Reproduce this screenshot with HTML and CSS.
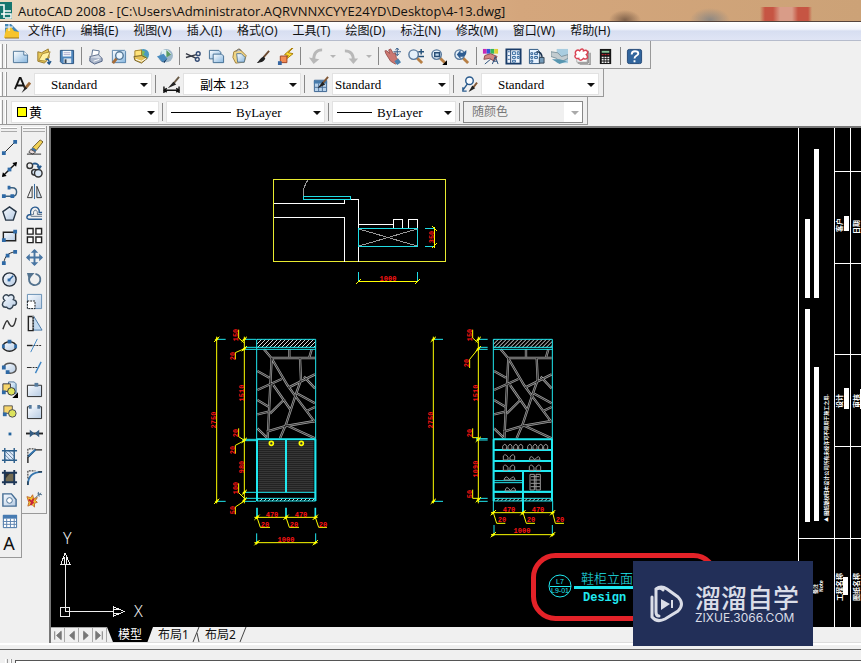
FILE: index.html
```html
<!DOCTYPE html>
<html lang="zh-CN">
<head>
<meta charset="utf-8">
<title>AutoCAD 2008</title>
<link rel="stylesheet" href="styles.css">
</head>
<body>
<svg class="defs" aria-hidden="true">
  <defs>
    <linearGradient id="sheet" x1="0" y1="0" x2="1" y2="1"><stop offset="0" stop-color="#fff"/><stop offset="1" stop-color="#86b6df"/></linearGradient>
    <linearGradient id="soft" x1="0" y1="0" x2="1" y2="1"><stop offset="0" stop-color="#f8fbff"/><stop offset="1" stop-color="#b6cbe3"/></linearGradient>
    <symbol id="magnifier" viewBox="0 0 18 18"><path d="M10 10l6 6" stroke="#b77f45" stroke-width="3"/><circle cx="7" cy="7" r="5" fill="#e5f0fa" stroke="#59799c" stroke-width="1.500"/></symbol>
    <symbol id="brush" viewBox="0 0 18 18"><path d="M16 3l-6 7" stroke="#6a4a31" stroke-width="2"/><path d="M10 9l2 2c-2 4-5 4-9 5 2-2 4-6 7-7z" fill="#222"/></symbol>
    <symbol id="arrow" viewBox="0 0 8 4"><path d="M0 0h8L4 4z" fill="currentColor"/></symbol>
  </defs>
</svg>
<div class="app">
  <header class="title">
    <svg class="app-icon" viewBox="0 0 12 18"><path d="M0 0h12v17H0z" fill="#16766f"/><path d="M0 3h4v6h7M4 9v7M1 12h10v4H5" fill="none" stroke="#fff" stroke-width="1.500"/></svg>
    <h1>AutoCAD 2008 - [C:\Users\Administrator.AQRVNNXCYYE24YD\Desktop\4-13.dwg]</h1>
  </header>
  <nav class="menu">
    <svg width="16" height="17" viewBox="0 0 16 17"><path d="M1 1h6l8 8v6H1z" fill="#4687b5"/><path d="M2 6l5-2 3 4 5 1v6H0z" fill="#f7c42c"/><path d="M1 4h8M5 0v8" stroke="#fff"/><path d="M1 15h14" stroke="#9c741d"/></svg>
    <button>文件(F)</button><button>编辑(E)</button><button>视图(V)</button><button>插入(I)</button><button>格式(O)</button><button>工具(T)</button><button>绘图(D)</button><button>标注(N)</button><button>修改(M)</button><button>窗口(W)</button><button>帮助(H)</button>
  </nav>

  <div class="bar standard">
    <i class="grip"></i>
    <button aria-label="新建"><svg viewBox="0 0 18 18"><path d="M1.500 3.500h11l4 4v8h-15z" fill="url(#sheet)" stroke="#4b7396"/><path d="M12.500 3.500v4h4" fill="#fff" stroke="#4b7396"/></svg></button>
    <button aria-label="打开"><svg viewBox="0 0 18 18"><path d="M3 4l4 1 7-4 1 9-5 6-7-2z" fill="#e8c957" stroke="#97782a"/><path d="M4 13l4-7 8-2-4 10z" fill="#fff1a0" stroke="#a98a36"/><path d="M11 12c3-1 4 1 4 4M13 15l2 2 2-3" fill="none" stroke="#24588a" stroke-width="1.500"/></svg></button>
    <button aria-label="保存"><svg viewBox="0 0 18 18"><path d="M2.500 2.500h14v14h-12l-2-2z" fill="#4e86bd" stroke="#28527d"/><path d="M5 3h9v6H5z" fill="#f4f8fc"/><path d="M6 5h7M6 7h7" stroke="#aac"/><path d="M6 11h8v5H6z" fill="#dfe9f2"/><path d="M7 12h2v4H7z" fill="#345"/></svg></button>
    <i class="sep"></i>
    <button aria-label="打印"><svg viewBox="0 0 18 18"><path d="M5 8l1-6 7 1-1 6" fill="#fff" stroke="#58708f"/><path d="M3 9l9-2 4 4-9 4z" fill="#d5dce8" stroke="#5c6c89"/><path d="M3 10v4l5 3 8-3v-3" fill="#aab6ca" stroke="#4d5f81"/><path d="M7 14l6-2" stroke="#fff"/></svg></button>
    <button aria-label="打印预览"><svg viewBox="0 0 18 18"><path d="M2.500 2.500h13l1 1v12h-14z" fill="url(#sheet)" stroke="#5783aa"/><path d="M8 10l-5 6" stroke="#a66c38" stroke-width="3"/><circle cx="10" cy="8" r="4" fill="#eaf6ff" stroke="#567999" stroke-width="1.500"/></svg></button>
    <button aria-label="发布"><svg viewBox="0 0 18 18"><circle cx="11" cy="7" r="6" fill="#4b99c0"/><path d="M8 2l5 2-2 3 4 3-4 2z" fill="#80ba56"/><path d="M2 3l7-1v7H2z" fill="#ffe37a" stroke="#a38127"/><path d="M1 9l8-1 6 3-6 5-7-3z" fill="#e4c158" stroke="#746026"/><path d="M3 12l6 2 5-3" fill="none" stroke="#fff"/></svg></button>
    <button aria-label="三维发布"><svg viewBox="0 0 18 18"><circle cx="11" cy="8" r="7" fill="#9db7c9"/><path d="M6 2h6l4 4-5 4-5-2z" fill="#e1f0f3"/><path d="M11 2l5 5-5 3z" fill="#5b9b61"/><path d="M1 9l7-3 4 5-5 4z" fill="#4a8cc0"/><path d="M2 11l5 4 5-4-3 5z" fill="#173c65"/></svg></button>
    <i class="sep"></i>
    <button aria-label="剪切"><svg viewBox="0 0 18 18"><path d="M1 6l11 5M1 10l11-3" stroke="#353a45" stroke-width="1.500"/><circle cx="14" cy="6" r="2" fill="none" stroke="#334b74" stroke-width="1.500"/><circle cx="13" cy="12" r="2" fill="none" stroke="#334b74" stroke-width="1.500"/></svg></button>
    <button aria-label="复制"><svg viewBox="0 0 18 18"><path d="M1.500 2.500h10l2 2v7h-12z" fill="url(#sheet)" stroke="#426c92"/><path d="M5.500 6.500h9l2 2v7h-11z" fill="url(#sheet)" stroke="#426c92"/></svg></button>
    <button aria-label="粘贴"><svg viewBox="0 0 18 18"><path d="M3 4l6-3 7 7-2 7-9 1-3-6z" fill="#f0d585" stroke="#a18038"/><path d="M6 6h5l4 4-1 5H7z" fill="url(#sheet)" stroke="#587892"/><path d="M5 4l3-3 3 2" fill="#bbb" stroke="#666"/></svg></button>
    <button aria-label="特性匹配"><svg viewBox="0 0 18 18"><use href="#brush"/></svg></button>
    <button aria-label="块编辑器"><svg viewBox="0 0 18 18"><path d="M16 0L8 7l4 1-5 6 10-8-5-1 5-5z" fill="#ffe030" stroke="#a77900"/><path d="M3.500 8.500h7v7h-7z" fill="#f48c53" stroke="#9b4223"/><path d="M1 14h4v4H1z" fill="#3566a2"/></svg></button>
    <i class="sep"></i>
    <button class="step" aria-label="放弃"><svg viewBox="0 0 18 18"><path d="M16 2C10 2 7 6 7 13" fill="none" stroke="#b8b8b8" stroke-width="3"/><path d="M2 10l5 7 6-5z" fill="#b8b8b8"/></svg></button>
    <button class="more" aria-label="放弃列表"><svg viewBox="0 0 8 4"><use href="#arrow"/></svg></button>
    <button class="step" aria-label="重做"><svg viewBox="0 0 18 18"><path d="M2 3c6 0 9 4 9 10" fill="none" stroke="#b8b8b8" stroke-width="3"/><path d="M6 11l5 6 5-6z" fill="#b8b8b8"/></svg></button>
    <button class="more" aria-label="重做列表"><svg viewBox="0 0 8 4"><use href="#arrow"/></svg></button>
    <i class="sep"></i>
    <button aria-label="平移"><svg viewBox="0 0 18 18"><path d="M1 3l2 0 3 3-1-4 2-1 3 5 2-1 1 5 3 4-4 3-5-3-5-8z" fill="#cc7771" stroke="#9c5653"/><path d="M11 14l4-3 3 4-4 3z" fill="#4a80ad"/><path d="M14 0v8M10 4h8M12 2l2-2 2 2M12 6l2 2 2-2" fill="none" stroke="#2c5685"/></svg></button>
    <button aria-label="实时缩放"><svg viewBox="0 0 18 18"><use href="#magnifier"/><path d="M12 4h6M15 1v6M12 9h6" stroke="#245078" stroke-width="1.500"/></svg></button>
    <button aria-label="窗口缩放"><svg viewBox="0 0 18 18"><use href="#magnifier"/><path d="M5 5h5v4H5z" fill="#bdd7ed" stroke="#294d75" stroke-width="1.500"/><path d="M18 13v5h-5z"/></svg></button>
    <button aria-label="缩放上一个"><svg viewBox="0 0 18 18"><use href="#magnifier"/><path d="M4 7l4-5v3c3 0 4-1 6-3 1 5-2 8-6 7v3z" fill="#2d5c91"/></svg></button>
    <i class="sep"></i>
    <button aria-label="特性"><svg viewBox="0 0 18 18"><path d="M1 1h4v5H1z" fill="#c82ab7"/><path d="M5 1h4v5H5z" fill="#3256da"/><path d="M9 1h4v5H9z" fill="#34b65a"/><path d="M13 1h4v5h-4z" fill="#e1d134"/><path d="M3 8l6-2 7 3-3 5-5-3-6 1z" fill="#d48783" stroke="#8e4a4c"/><path d="M3 17l6-5M11 17l3-8 3 8M12 14h4" fill="none" stroke="#274d79"/></svg></button>
    <button aria-label="设计中心"><svg viewBox="0 0 18 18"><path d="M1.500 1.500h15v15h-15z" fill="#eff6ff" stroke="#1a3c68" stroke-width="2"/><path d="M6 2v14" stroke="#1a3c68"/><path d="M3 4h2M3 8h2M3 12h2M8 4h3v3H8zM13 4h2v3h-2zM8 9h3v2H8zM13 9h2v2h-2zM8 13h3v2H8z" fill="none" stroke="#31669d"/></svg></button>
    <button aria-label="工具选项板"><svg viewBox="0 0 18 18"><path d="M1.500 1.500h9l2 3v12h-11z" fill="#e7f2ff" stroke="#285580"/><path d="M3 5h2v2H3zM7 5h3v2H7zM3 9h2v2H3zM7 9h3v2H7zM3 13h2v2H3z" fill="none" stroke="#2a5d94"/><path d="M9 4c5 0 6 3 6 7" fill="none" stroke="#172e4b" stroke-width="1.500"/><path d="M12 10h5v6h-5z" fill="#759bb9" stroke="#345"/></svg></button>
    <button aria-label="图纸集"><svg viewBox="0 0 18 18"><path d="M6 1h12v15H6z" fill="#a9cde0"/><path d="M0 4l7 1 4 4 7-2v4l-8 4-4-4-6-2z" fill="#c3ccd0" stroke="#7d949e"/><path d="M1 12h8l8 2-8 3z" fill="#5796b0"/></svg></button>
    <button aria-label="标记集"><svg viewBox="0 0 18 18"><path d="M3 3h11v12H3z" fill="#fff" stroke="#aaa"/><path d="M15 3v13H4M17 5v13H6" fill="none" stroke="#666"/><path d="M2 7c-2-4 2-6 4-4 2-3 4-2 4 0 4-2 6 2 3 4 3 3 0 6-3 4-2 3-5 2-5 0-4 1-5-3-3-4z" fill="#fff" stroke="#d94252" stroke-width="1.500"/></svg></button>
    <button aria-label="计算器"><svg viewBox="0 0 18 18"><path d="M3 1h12v16H3z" fill="#161616"/><path d="M5 3h8v2H5z" fill="#85c397"/><path d="M5 7h8" stroke="#d72432" stroke-dasharray="2 1"/><path d="M5 10h8M5 12.500h8M5 15h8" stroke="#eee" stroke-width="1.500" stroke-dasharray="2 1"/></svg></button>
    <i class="sep"></i>
    <button aria-label="帮助"><svg viewBox="0 0 18 18"><rect x="1.500" y="1.500" width="15" height="15" rx="2" fill="#31659d" stroke="#234876"/><path d="M6 7c0-5 7-4 7-1 0 2-4 2-4 5M9 13v2" fill="none" stroke="#fff" stroke-width="2"/></svg></button>
  </div>

  <div class="bar styles">
    <i class="grip"></i>
    <button class="wide" aria-label="文字样式"><svg viewBox="0 0 18 18"><path d="M1 14L6 2h1l5 12M3 10h7" fill="none" stroke="#141414" stroke-width="2"/><path d="M17 7l-5 6" stroke="#9c6a3a" stroke-width="3"/><path d="M12 11l2 2-6 5z" fill="#222"/></svg></button>
    <label class="combo inset"><select aria-label="文字样式列表"><option>Standard</option></select><svg viewBox="0 0 8 4"><use href="#arrow"/></svg></label>
    <i class="sep"></i>
    <button class="wide" aria-label="标注样式"><svg viewBox="0 0 18 18"><path d="M1 11v7M17 11v7M2 15h14M4 13l-3 2 3 2M14 13l3 2-3 2" fill="none" stroke="#111" stroke-width="1.500"/><path d="M17 1l-6 7" stroke="#685945" stroke-width="2"/><path d="M11 6l3 3-9 4z" fill="#222"/></svg></button>
    <label class="combo inset"><select aria-label="标注样式列表"><option>副本 123</option></select><svg viewBox="0 0 8 4"><use href="#arrow"/></svg></label>
    <i class="sep"></i>
    <button class="wide" aria-label="表格样式"><svg viewBox="0 0 18 18"><path d="M2.500 4.500h13v12h-13z" fill="#b9d3eb" stroke="#36618e"/><path d="M2 5h14v3H2z" fill="#477bab"/><path d="M3 12h12M7 8v8M11 8v8" stroke="#496f98"/><path d="M17 1l-6 7" stroke="#805634" stroke-width="2"/><path d="M11 6l3 3-8 4z" fill="#222"/></svg></button>
    <label class="combo"><select aria-label="表格样式列表"><option>Standard</option></select><svg viewBox="0 0 8 4"><use href="#arrow"/></svg></label>
    <i class="sep"></i>
    <button class="wide" aria-label="多重引线样式"><svg viewBox="0 0 18 18"><circle cx="9" cy="5" r="4" fill="#f8fbff" stroke="#2a5b8d" stroke-width="1.500"/><path d="M7 8l-5 7M2 12v4h4" fill="none" stroke="#2a5b8d" stroke-width="1.500"/><path d="M17 7l-4 5" stroke="#805634" stroke-width="2"/><path d="M12 10l3 3-7 4z" fill="#222"/></svg></button>
    <label class="combo inset"><select aria-label="引线样式列表"><option>Standard</option></select><svg viewBox="0 0 8 4"><use href="#arrow"/></svg></label>
  </div>

  <div class="bar properties">
    <i class="grip"></i>
    <label class="combo color"><i class="swatch"></i><select aria-label="颜色"><option>黄</option></select><svg viewBox="0 0 8 4"><use href="#arrow"/></svg></label>
    <i class="sep"></i>
    <label class="combo linetype"><i class="rule"></i><select aria-label="线型"><option>ByLayer</option></select><svg viewBox="0 0 8 4"><use href="#arrow"/></svg></label>
    <i class="sep"></i>
    <label class="combo weight"><i class="rule"></i><select aria-label="线宽"><option>ByLayer</option></select><svg viewBox="0 0 8 4"><use href="#arrow"/></svg></label>
    <i class="sep"></i>
    <label class="combo plot"><select aria-label="打印样式" disabled><option>随颜色</option></select><svg viewBox="0 0 8 4"><use href="#arrow"/></svg></label>
  </div>

  <main class="workspace">
    <aside class="palette draw">
      <i class="grip-h"></i>
      <button aria-label="直线"><svg viewBox="0 0 18 18"><path d="M3 15L15 3" stroke="#222"/><path d="M1 13h4v4H1zM13 1h4v4h-4z" fill="#2e69a5"/></svg></button>
      <button aria-label="构造线"><svg viewBox="0 0 18 18"><path d="M2 16L16 2" stroke="#111" stroke-width="1.500"/><path d="M1 17l1-5 4 4zM17 1l-1 5-4-4z"/><path d="M7 7h4v4H7z" fill="#2e69a5"/></svg></button>
      <button aria-label="多段线"><svg viewBox="0 0 18 18"><path d="M3 14h9c6 0 6-9 0-9H9" fill="none" stroke="#3b607f" stroke-width="1.500"/><path d="M1 12h4v4H1zM10 12h4v4h-4zM7 3h3v4H7z" fill="#2e69a5"/></svg></button>
      <button aria-label="正多边形"><svg viewBox="0 0 18 18"><path d="M9 2l7 5-3 9H5L2 7z" fill="url(#soft)" stroke="#263545" stroke-width="1.500"/></svg></button>
      <button aria-label="矩形"><svg viewBox="0 0 18 18"><path d="M2.500 5.500h13v9h-13z" fill="url(#soft)" stroke="#222" stroke-width="1.500"/><path d="M1 12h4v4H1zM13 3h4v4h-4z" fill="#2e69a5"/></svg></button>
      <button aria-label="圆弧"><svg viewBox="0 0 18 18"><path d="M3 15C4 7 8 4 15 3" fill="none" stroke="#222"/><path d="M1 13h4v4H1zM5 5h4v4H5zM13 1h4v4h-4z" fill="#2e69a5"/></svg></button>
      <button aria-label="圆"><svg viewBox="0 0 18 18"><circle cx="9" cy="9" r="7" fill="url(#soft)" stroke="#252f3c" stroke-width="1.500"/><path d="M8 10l5-5" stroke="#245b95" stroke-width="1.500"/><path d="M7 8h3v3H7z" fill="#2e69a5"/></svg></button>
      <button aria-label="修订云线"><svg viewBox="0 0 18 18"><path d="M4 8C0 5 4 0 8 3c4-3 7 1 5 4 5 1 4 7 0 6-1 4-5 5-7 2-5 1-6-4-2-7z" fill="url(#soft)" stroke="#344352" stroke-width="1.500"/></svg></button>
      <button aria-label="样条曲线"><svg viewBox="0 0 18 18"><path d="M2 15C7 1 7 7 9 10s5 4 7-7" fill="none" stroke="#333" stroke-width="1.500"/></svg></button>
      <button aria-label="椭圆"><svg viewBox="0 0 18 18"><ellipse cx="9" cy="10" rx="7" ry="5" fill="url(#soft)" stroke="#222" stroke-width="1.500"/><path d="M1 8h3v4H1zM14 8h3v4h-3zM7 3h4v4H7z" fill="#2e69a5"/></svg></button>
      <button aria-label="椭圆弧"><svg viewBox="0 0 18 18"><path d="M3 8c2-5 13-5 13 2 0 5-7 6-9 4" fill="url(#soft)" stroke="#555" stroke-width="1.500"/><path d="M1 7h4v4H1zM5 12h4v4H5z" fill="#2e69a5"/></svg></button>
      <button aria-label="插入块"><svg viewBox="0 0 18 18"><path d="M8 1h6l2 2v10H8z" fill="url(#sheet)" stroke="#4b7396"/><path d="M2 3h8v8H2z" fill="#f7d56a" stroke="#334"/><circle cx="11" cy="11" r="4" fill="#dce35d" stroke="#334"/><path d="M1 10h4v4H1z" fill="#2e69a5"/><path d="M18 12v6h-6z"/></svg></button>
      <button aria-label="创建块"><svg viewBox="0 0 18 18"><path d="M3 3h9v8H3z" fill="#f7d56a" stroke="#555"/><circle cx="12" cy="11" r="4" fill="#dce35d" stroke="#445"/><path d="M2 10h4v4H2z" fill="#2e69a5"/></svg></button>
      <button aria-label="点"><svg viewBox="0 0 18 18"><path d="M8 8h3v3H8z" fill="#22639d"/></svg></button>
      <button aria-label="图案填充"><svg viewBox="0 0 18 18"><path d="M4 4h10v10H4z" fill="#dceafa"/><path d="M4 4l10 10M4 8l6 6M8 4l6 6M4 12l2 2M12 4l2 2" stroke="#6c849d"/><path d="M4 1v16M14 1v16M1 4h16M1 14h16" stroke="#2b5e8b" stroke-width="1.500"/></svg></button>
      <button aria-label="渐变色"><svg viewBox="0 0 18 18"><path d="M4 4h10v10H4z" fill="#746c52"/><path d="M4 4h6L4 11z" fill="#333"/><path d="M4 1v16M14 1v16M1 4h16M1 14h16" stroke="#1d3657" stroke-width="2"/></svg></button>
      <button aria-label="面域"><svg viewBox="0 0 18 18"><path d="M2 3h9l5 6v7H2z" fill="url(#soft)" stroke="#446c94" stroke-width="1.500"/><circle cx="9" cy="10" r="3" fill="#fff" stroke="#446c94"/></svg></button>
      <button aria-label="表格"><svg viewBox="0 0 18 18"><path d="M2.500 2.500h14v13h-14z" fill="#fff" stroke="#3c6ca2"/><path d="M2 2h15v4H2z" fill="#477bb2"/><path d="M2 9h14M2 12h14M6 6v9M10 6v9M14 6v9" stroke="#5b82ae"/></svg></button>
      <button class="letter" aria-label="多行文字">A</button>
    </aside>
    <aside class="palette modify">
      <i class="grip-h"></i>
      <button aria-label="删除"><svg viewBox="0 0 18 18"><path d="M15 1l3 2-7 9-4-3z" fill="#f0d155" stroke="#6d5928"/><path d="M7 9l4 3-1 2-5-3z" fill="#3f70a0"/><path d="M5 11l5 3-3 2-4-2z" fill="#e9d9d9" stroke="#555"/><path d="M1 16h15" stroke="#222"/></svg></button>
      <button aria-label="复制对象"><svg viewBox="0 0 18 18"><circle cx="4" cy="5" r="3" fill="#eee" stroke="#333" stroke-width="1.500"/><circle cx="9" cy="12" r="3" fill="#dbe9f7" stroke="#333" stroke-width="1.500"/><circle cx="13" cy="13" r="4" fill="#dbe9f7" stroke="#333" stroke-width="1.500"/><path d="M7 3c4-1 6 0 7 4M12 5l2 3 2-3" fill="none" stroke="#27598b" stroke-width="2"/></svg></button>
      <button aria-label="镜像"><svg viewBox="0 0 18 18"><path d="M6.500 3.500v12h-5z" fill="#f5f5f5" stroke="#333"/><path d="M11.500 3.500v12h5z" fill="#cfe0f0" stroke="#333"/><path d="M9 1v16" stroke="#2b649c"/></svg></button>
      <button aria-label="偏移"><svg viewBox="0 0 18 18"><path d="M17 15H3c-3 0-3-5 2-5C3 0 15 0 14 8h3" fill="none" stroke="#285a8f" stroke-width="1.500"/><path d="M17 12H6c-2 0-1-2 2-2-1-6 5-6 4 0h5" fill="none" stroke="#5a6e85"/></svg></button>
      <button aria-label="阵列"><svg viewBox="0 0 18 18"><path d="M1.500 1.500h6v6h-6zM10.500 1.500h6v6h-6zM1.500 10.500h6v6h-6zM10.500 10.500h6v6h-6z" fill="#fff" stroke="#222" stroke-width="1.500"/></svg></button>
      <button aria-label="移动"><svg viewBox="0 0 18 18"><path d="M9 1v16M1 9h16" stroke="#4976a3" stroke-width="2"/><path d="M5 4l4-4 4 4zM5 14l4 4 4-4zM4 5L0 9l4 4zM14 5l4 4-4 4z" fill="#4976a3"/></svg></button>
      <button aria-label="旋转"><svg viewBox="0 0 18 18"><path d="M4 6a6 6 0 1 0 6-3" fill="none" stroke="#54738f" stroke-width="2"/><path d="M1 2h8l-6 7z" fill="#54738f"/></svg></button>
      <button aria-label="缩放对象"><svg viewBox="0 0 18 18"><path d="M1.500 1.500h15v15h-15z" fill="url(#soft)" stroke="#648cb3"/><path d="M1.500 8.500h8v8h-8z" fill="#fff" stroke="#111" stroke-dasharray="2 1"/></svg></button>
      <button aria-label="拉伸"><svg viewBox="0 0 18 18"><path d="M8 1l9 15H8z" fill="#c4dbf0" stroke="#4776a5"/><path d="M2.500 1.500h5v15h-5z" fill="#eee" stroke="#222" stroke-width="1.500"/><path d="M7.500 1v15" stroke="#fff" stroke-dasharray="1 2"/></svg></button>
      <button aria-label="修剪"><svg viewBox="0 0 18 18"><path d="M1 9h6" stroke="#222" stroke-width="1.500"/><path d="M8 9h9" stroke="#222" stroke-dasharray="2 1"/><path d="M5 16L12 2" stroke="#3e86c5"/></svg></button>
      <button aria-label="延伸"><svg viewBox="0 0 18 18"><path d="M1 9h5" stroke="#222"/><path d="M7 9h5" stroke="#222" stroke-dasharray="2 1"/><path d="M10 15l6-12" stroke="#3e86c5" stroke-width="1.500"/></svg></button>
      <button aria-label="打断于点"><svg viewBox="0 0 18 18"><path d="M1.500 4.500h15v12h-15z" fill="url(#soft)" stroke="#222"/><path d="M9 2h4v4H9z" fill="#557a9d"/></svg></button>
      <button aria-label="打断"><svg viewBox="0 0 18 18"><path d="M5 4H1.500v12.500h15V4H13" fill="url(#soft)" stroke="#222"/><path d="M3 2h3v4H3zM12 2h3v4h-3z" fill="#557a9d"/></svg></button>
      <button aria-label="合并"><svg viewBox="0 0 18 18"><path d="M0 9h18" stroke="#222" stroke-width="2"/><path d="M4 5l5 4-5 4zM14 5L9 9l5 4z" fill="#355d83"/></svg></button>
      <button aria-label="倒角"><svg viewBox="0 0 18 18"><path d="M2 17v-6l8-8h7" fill="none" stroke="#222" stroke-width="1.500"/><path d="M2 10l8-7" stroke="#3475ae" stroke-width="2"/><path d="M2 10V2h8" fill="none" stroke="#111" stroke-dasharray="2 1"/></svg></button>
      <button aria-label="圆角"><svg viewBox="0 0 18 18"><path d="M2 17c0-9 5-14 15-14" fill="none" stroke="#3475ae" stroke-width="2"/><path d="M2 17v-4M13 3h4" stroke="#222"/><path d="M2 10V2h8" fill="none" stroke="#111" stroke-dasharray="2 1"/></svg></button>
      <button aria-label="分解"><svg viewBox="0 0 18 18"><path d="M1 6l4 1 2-3 1 4 4-1-2 3 2 2-3 1v4l-3-3-4 2 1-4z" fill="#f0c331" stroke="#c06a2c"/><path d="M3 9l5 4M8 8l-3 7" stroke="#c8203a" stroke-width="2"/><path d="M10 7l6-5M13 1l1 5M12 3l5 1" stroke="#51728c"/></svg></button>
    </aside>

    <section class="document">
      <svg class="drawing" viewBox="51 128 810 499" preserveAspectRatio="xMinYMin slice" role="img" aria-label="鞋柜立面">
        <defs>
          <pattern id="hatch" width="12" height="12" patternUnits="userSpaceOnUse"><path d="M-3 15L15-3M-3 3L3-3M9 15l6-6" stroke="#ddd" stroke-width="3"/></pattern>
          <pattern id="louvre" width="6" height="6" patternUnits="userSpaceOnUse" patternTransform="translate(0 347)"><path d="M0 2h6" stroke="#858585" stroke-width="2"/></pattern>
          <path id="cracks" d="M192 73L215 100L262 180L285 212L325 265L345 292M215 99H345M215 99L203 340M268 73V96M335 73L328 97M300 99L303 165L288 207L258 298L240 340M345 148L265 188M172 195L245 162M172 138L208 158M172 225L206 245M172 268L206 260M220 180L272 255M254 222L210 266M200 320L258 303L345 288M258 300L345 340M290 205L345 235M312 155L345 190M320 258L345 246M172 310L203 340"/>
          <g id="panel">
            <path d="M170 43h177v25H170z" fill="url(#hatch)"/>
            <use href="#cracks" fill="none" stroke="#a0a0a0" stroke-width="7"/>
            <use href="#cracks" fill="none" stroke="#000" stroke-width="2"/>
            <path d="M170 520h177v8H170z" fill="url(#hatch)"/>
            <path d="M170 43h177v485H170zM170 67h177M170 73h177M170 502h177M170 520h177" fill="none" stroke="#20e8f0" stroke-width="3"/>
            <path d="M170 343h177M171 343v185M346 343v185" stroke="#20e8f0" stroke-width="6"/>
          </g>
          <g id="tick"><path d="M-8 8L8-8" stroke="#ff0" stroke-width="3"/><path d="M-4 4L4-4" stroke="#ff0" stroke-width="6"/></g>
        </defs>

        <g fill="none" stroke="#fff" shape-rendering="crispEdges">
          <path d="M273.500 179.500h172v82h-172z" stroke="#e8ea30"/>
          <path d="M274 203.500h70v-4h14.500v62M274 217.500h70.500v44M359 224.500h34M393.500 219.500h9v9h-9zM408.500 219.500h9v9h-9z"/>
          <path d="M303.500 196.500h47v3h-47z" stroke="#20dde5"/>
          <path d="M358.500 228.500h59v18h-59zM425 228.500h9M425 246.500h9M358.500 272v10M417.500 272v10" stroke="#20dde5"/>
          <path d="M359 229l58 17M417 229l-58 17M308 180c-3 4-5 9-5 16" stroke="#999"/>
          <path d="M358 281.500h60M434.500 227v21M356 284l5-5M415 284l5-5M432 226l5 5M432 248l5-5" stroke="#ff0"/>
        </g>

        <g transform="translate(200 325) scale(.3333333)">
          <use href="#panel"/>
          <path d="M175 348h80v152h-80zM261 348h80v152h-80z" fill="url(#louvre)"/>
          <path d="M258 345v157" stroke="#20e8f0" stroke-width="6"/>
          <circle cx="214" cy="355" r="6" fill="none" stroke="#ff0" stroke-width="5"/><circle cx="304" cy="355" r="6" fill="none" stroke="#ff0" stroke-width="5"/>
          <path d="M50 43h27M50 529h27M133 43h35M133 67h35M133 73h35M127 343h42M127 347h42M133 502h35M133 520h35M133 529h35M170 625v30M347 625v30" stroke="#20e8f0" stroke-width="3"/>
          <path d="M171 548v30M258 548v30M346 548v30" stroke="#20e8f0" stroke-width="5"/>
          <path d="M50 35v500M133 35v500M163 577h190M163 653h190M116 14v25l17 15M106 103V83l27-12M116 310v25l17 11M106 386v-25l27-14M116 475v28l17 17M106 568v-22l27-18M171 577l10 30h29M258 577l10 30h29M346 577l10 30h25" fill="none" stroke="#ff0" stroke-width="3"/>
          <use href="#tick" x="50" y="43"/><use href="#tick" x="50" y="529"/><use href="#tick" x="133" y="43"/><use href="#tick" x="133" y="71"/><use href="#tick" x="133" y="346"/><use href="#tick" x="133" y="502"/><use href="#tick" x="133" y="525"/><use href="#tick" x="171" y="577"/><use href="#tick" x="258" y="577"/><use href="#tick" x="346" y="577"/><use href="#tick" x="171" y="653"/><use href="#tick" x="346" y="653"/>
        </g>

        <g transform="translate(420 325) scale(.3333333)">
          <use href="#panel" x="50"/>
          <path d="M222 375h175M222 408h175M222 438h175M309 438v125M222 500h175" stroke="#20e8f0" stroke-width="6"/>
          <path d="M222 467h87M222 473h87M220 528v35M398 528v35M222 600v32M397 600v32M40 43h29M40 529h29M175 43h28M175 67h28M175 73h28M168 341h35M168 345h35M175 520h28M175 529h28" stroke="#20e8f0" stroke-width="3"/>
          <g fill="none" stroke="#999" stroke-width="3">
            <path d="M248 373v-9q7-12 12 0v9zM264 373v-9q7-12 12 0v9zM281 373v-9q7-12 12 0v9zM296 373v-9q7-12 12 0v9zM323 373v-9q7-12 12 0v9zM339 373v-9q7-12 12 0v9zM356 373v-9q7-12 12 0v9zM371 373v-9q7-12 12 0v9z"/>
            <path d="M250 405v-12q7-9 14 4v8zM284 405v-12q-7-9-14 4v8zM250 436v-12q7-9 14 4v8zM284 436v-12q-7-9-14 4v8zM328 436v-12q7-9 14 4v8zM362 436v-12q-7-9-14 4v8z"/>
            <path d="M328 405q3-20 16-1q15-18 16 1zM252 465q5-18 17-1q14-17 16 1zM255 498q4-20 16-1q13-18 16 1zM330 448h13v47h-13zM348 448h13v47h-13zM333 455h25M332 465h28M332 475h28M332 485h28"/>
          </g>
          <path d="M40 35v500M175 35v500M213 563h190M213 629h190M158 14v25l17 15M149 129v-26l26-32M158 310v28h17M158 494v26h17M220 563l10 32h26M309 563l10 32h26M398 563l8 32h26" fill="none" stroke="#ff0" stroke-width="3"/>
          <use href="#tick" x="40" y="43"/><use href="#tick" x="40" y="529"/><use href="#tick" x="175" y="43"/><use href="#tick" x="175" y="71"/><use href="#tick" x="175" y="343"/><use href="#tick" x="175" y="524"/><use href="#tick" x="220" y="563"/><use href="#tick" x="309" y="563"/><use href="#tick" x="398" y="563"/><use href="#tick" x="220" y="629"/><use href="#tick" x="398" y="629"/>
        </g>

        <g class="dims">
          <text x="388" y="281">1000</text><text x="286" y="542">1000</text><text x="522" y="533">1000</text>
          <text x="272" y="517">470</text><text x="301" y="517">470</text><text x="509" y="512">470</text><text x="538" y="512">470</text>
          <text x="265" y="527">20</text><text x="294" y="527">20</text><text x="323" y="527">20</text>
          <text x="502" y="522">20</text><text x="531" y="522">20</text><text x="560" y="522">20</text>
          <text transform="translate(434 237) rotate(-90)">350</text>
          <text transform="translate(216 420) rotate(-90)">2750</text><text transform="translate(433 420) rotate(-90)">2750</text>
          <text transform="translate(244 393) rotate(-90)">1510</text><text transform="translate(478 393) rotate(-90)">1510</text>
          <text transform="translate(238 335) rotate(-90)">150</text><text transform="translate(472 335) rotate(-90)">150</text>
          <text transform="translate(235 356) rotate(-90)">20</text><text transform="translate(469 363) rotate(-90)">20</text>
          <text transform="translate(238 433) rotate(-90)">20</text><text transform="translate(472 433) rotate(-90)">20</text>
          <text transform="translate(235 450) rotate(-90)">20</text><text transform="translate(244 467) rotate(-90)">980</text>
          <text transform="translate(478 469) rotate(-90)">1090</text><text transform="translate(238 488) rotate(-90)">100</text>
          <text transform="translate(235 510) rotate(-90)">50</text><text transform="translate(472 494) rotate(-90)">50</text>
        </g>

        <g fill="none" stroke="#fff" shape-rendering="crispEdges">
          <path d="M798.500 128v499M834.500 128v499M850.500 128v499M834 171.500h27M834 263.500h27M834 354.500h27M834 446.500h27M798 538.500h63"/>
          <path d="M814 149h5v149h-5zM805 219h5v79h-5zM805 309h5v213h-5zM814 367h5v154h-5zM844 216h5v15h-5zM844 388h5v21h-5zM843 577h5v18h-5zM860 389h1v20h-1z" fill="#fff" stroke="none"/>
        </g>
        <g class="sheet-text">
          <text transform="translate(842 232) rotate(-90)">客户</text><text transform="translate(859 234) rotate(-90)">日期</text>
          <text transform="translate(842 408) rotate(-90)">设计</text><text transform="translate(859 408) rotate(-90)">审核</text>
          <text transform="translate(842 601) rotate(-90)">工程名称</text><text transform="translate(859 601) rotate(-90)">图纸名称</text>
          <text class="fine" transform="translate(828 522) rotate(-90)">▲ 图纸版权归本设计公司所有未经许可不得用于施工之用.</text>
          <text class="fine" transform="translate(817 594) rotate(-90)">备注</text><text class="fine" transform="translate(823 592) rotate(-90)">Note</text>
        </g>

        <g fill="none" stroke="#eee" shape-rendering="crispEdges">
          <path d="M60.500 607.500h9v9h-9zM65.500 564v47M65 611.500h48M65 553l-4 11h9zM64 557v7M66 557v7M124 611.500l-11-5v10zM113 609h7M113 613h7"/>
        </g>
        <g class="axis"><text x="63" y="544">Y</text><text x="134" y="617">X</text></g>

        <g stroke="#20e8f0" fill="none"><circle cx="560" cy="586" r="11"/><path d="M550 586.500h21"/><path d="M574 587.500h70" stroke-width="3"/></g>
        <g class="caption"><text class="mark" x="560" y="584">L7</text><text class="mark" x="560" y="593">L9-01</text><text class="name" x="581" y="583">鞋柜立面图</text><text class="english" x="583" y="601">Design at</text></g>
        <rect x="533.500" y="555.500" width="182" height="63" rx="22" fill="none" stroke="#e32228" stroke-width="5"/>
      </svg>
      <nav class="tabs">
        <button class="jump" aria-label="第一个"><svg viewBox="0 0 14 14"><path d="M4 3v9M11 3L6 7.500l5 4.500z"/></svg></button>
        <button class="jump" aria-label="上一个"><svg viewBox="0 0 14 14"><path d="M10 3L5 7.500l5 4.500z"/></svg></button>
        <button class="jump" aria-label="下一个"><svg viewBox="0 0 14 14"><path d="M5 3l5 4.500L5 12z"/></svg></button>
        <button class="jump" aria-label="最后一个"><svg viewBox="0 0 14 14"><path d="M10 3v9M3 3l5 4.500L3 12z"/></svg></button>
        <button class="tab current">模型</button><button class="tab">布局1</button>
        <svg class="slash" viewBox="0 0 8 15"><path d="M1 15L7 0M5 6l2 9"/></svg>
        <button class="tab">布局2</button>
        <svg class="slash" viewBox="0 0 8 15"><path d="M1 15L7 0"/></svg>
      </nav>
      <div class="watermark">
        <svg viewBox="0 0 36 38"><path d="M9 4Q14 0 20 4L31 12q7 7 0 14L18 34Q10 38 5 32V12M9 4v23q0 4 3 4M9 4Q14 2 16 5" fill="none" stroke="#dadde7" stroke-width="3" stroke-linecap="round"/><path d="M14 14l9 5-9 6z" fill="#dadde7"/><path d="M25 15v8" stroke="#dadde7" stroke-width="2"/></svg>
        <div><strong>溜溜自学</strong><span>ZIXUE.3066.COM</span></div>
      </div>
    </section>
  </main>
  <footer class="command"><i class="grip"></i><label><input aria-label="命令行"></label></footer>
</div>
</body>
</html>
```
FILE: styles.css
```css
* { box-sizing: border-box; }
body { margin: 0; background: #f0f0f0; font: 12px "Noto Sans", "Noto Sans CJK SC", sans-serif; color: #111; }
button { border: 0; margin: 0; padding: 0; background: none; font: inherit; color: inherit; }
svg { display: block; flex: none; }
.defs { position: absolute; width: 0; height: 0; }
.app { display: flex; flex-direction: column; height: 100vh; overflow: hidden; }

.title {
  display: flex; align-items: center; gap: 6px; height: 22px; flex: none; overflow: hidden;
  border-bottom: 1px solid #55443c;
  background:
    radial-gradient(ellipse 16px 10px at 625px 20px, #80624b, transparent),
    radial-gradient(ellipse 20px 12px at 710px 20px, #8d8883, transparent),
    linear-gradient(90deg, transparent 760px, #c65543 765px 773px, #d99c88 780px 792px, #c65543 798px 808px, transparent 812px) 0 7px no-repeat,
    linear-gradient(90deg, #ead8be, #e4c3a0 200px, #d4a67c 520px, #cca277);
}
.title h1 { margin: 0; font: 400 13px "Open Sans", "Noto Sans", sans-serif; white-space: nowrap; }
.app-icon { width: 12px; height: 18px; }
.menu {
  display: flex; align-items: center; gap: 1px; height: 19px; flex: none; padding-left: 4px;
  background: linear-gradient(#fff 0, #f2f4fb 40%, #d7def1 50%, #e0e5f5 100%); border-bottom: 1px solid #b6bccc;
}
.menu button { padding: 0 7px; line-height: 18px; white-space: nowrap; }

.bar {
  display: flex; align-items: center; align-self: flex-start; flex: none; height: 28px;
  padding: 3px 4px 0 0; border-right: 1px solid #999; border-bottom: 1px solid #999;
}
.bar button { width: 23px; height: 22px; display: grid; place-items: center; }
.bar button svg { width: 17px; height: 17px; }
.bar .wide, .bar .step { width: 24px; }
.bar .more { width: 12px; color: #b5b5b5; }
.bar .more svg { width: 6px; height: 3px; }
.grip { width: 9px; height: 24px; flex: none; border-left: 1px solid #fff; background: linear-gradient(90deg, transparent 1px, #999 1px 2px, transparent 2px 4px, #fff 4px 5px, #999 5px 6px, transparent 6px); }
.styles .grip { width: 10px; }
.properties .grip { width: 11px; }
.sep { width: 6px; height: 18px; flex: none; background: linear-gradient(90deg, transparent 3px, #888 3px 4px, transparent 4px); }
.styles .sep, .properties .sep { width: 7px; }
.combo { position: relative; display: flex; align-items: center; width: 118px; height: 22px; background: #fff; border: 1px solid #e2e2e2; }
.combo select {
  flex: 1; min-width: 0; height: 20px; padding: 0 16px 0 2px; border: 0; appearance: none; background: none; color: #000; opacity: 1;
  font: 13px "Liberation Serif", "Noto Sans CJK SC", serif;
}
.combo.inset select { padding-left: 16px; }
.combo svg { position: absolute; right: 3px; top: 9px; width: 8px; height: 4px; pointer-events: none; }
.color { width: 148px; }
.linetype { width: 159px; }
.weight { width: 124px; }
.linetype select, .weight select { padding-left: 5px; }
.plot { width: 120px; border: 1px solid #888; background: linear-gradient(90deg, #f0f0f0 100px, #fff 100px); color: #aaa; }
.plot select { color: #777; padding-left: 8px; font-size: 12px; }
.swatch { width: 10px; height: 10px; margin-left: 5px; border: 1px solid #000; background: #ff0; }
.rule { width: 60px; height: 1px; margin-left: 4px; background: #000; }
.weight .rule { width: 35px; }

.workspace { display: flex; flex: 1; min-height: 0; padding-top: 1px; }
.palette { display: flex; flex-direction: column; align-items: center; align-self: flex-start; flex: none; border-right: 1px solid #999; border-bottom: 1px solid #999; padding: 1px 0 3px; }
.draw { width: 22px; padding-right: 3px; }
.modify { width: 25px; margin-right: 2px; }
.palette button { width: 100%; height: 22px; display: grid; place-items: center; }
.palette svg { width: 17px; height: 17px; }
.palette .letter { font-size: 18px; line-height: 22px; }
.grip-h { width: 90%; height: 9px; background: linear-gradient(#fff 0 1px, #aaa 1px 2px, transparent 2px 4px, #aaa 4px 5px, transparent 5px); }
.document { position: relative; display: flex; flex-direction: column; flex: 1; min-width: 0; border-left: 2px solid #777; border-top: 2px solid #777; }
.drawing { width: 100%; min-height: 0; flex: 1; background: #000; }
.dims { fill: #ff1414; font: bold 7px "Liberation Mono", monospace; text-anchor: middle; }
.sheet-text { fill: #fff; font: bold 7px "Noto Sans CJK SC", sans-serif; }
.sheet-text .fine { font-size: 5px; }
.axis { fill: #eee; font: 300 16px "Noto Sans", sans-serif; }
.caption { fill: #20e8f0; }
.caption .mark { font: 7px "Liberation Sans", sans-serif; text-anchor: middle; }
.caption .name { font: 300 13px "Noto Sans CJK SC", sans-serif; }
.caption .english { font: bold 12px "Liberation Mono", monospace; }

.tabs { display: flex; height: 16px; flex: none; border-bottom: 1px solid #ddd; background: #f0f0f0; }
.jump { width: 14px; border-right: 1px solid #aaa; border-top: 1px solid #aaa; }
.jump svg { width: 13px; height: 14px; fill: #777; stroke: #777; }
.tab { padding: 0 3px 0 5px; line-height: 15px; }
.current { width: 46px; padding: 0 5px; color: #fff; background: #000; clip-path: polygon(0 0, 100% 0, 88% 100%, 13% 100%); }
.slash { width: 8px; height: 15px; fill: none; stroke: #444; }
.watermark { position: absolute; right: 48px; bottom: -3px; display: flex; align-items: center; gap: 12px; width: 180px; height: 85px; padding-left: 14px; background: #222f58; color: #dadde7; }
.watermark > svg { width: 36px; height: 38px; }
.watermark div { display: flex; flex-direction: column; padding-bottom: 2px; }
.watermark strong { font: 500 26px/30px "Noto Sans CJK SC", sans-serif; white-space: nowrap; }
.watermark span { font: 12px/12px Inter, sans-serif; white-space: nowrap; }
.command { display: flex; align-items: flex-end; gap: 1px; height: 20px; flex: none; padding-left: 5px; background: linear-gradient(#fff 0 2px, #f0f0f0 2px 6px, #666 6px 7px, #f0f0f0 7px); }
.command .grip { height: 4px; }
.command label { display: flex; flex: 1; height: 3px; border-top: 1px solid #555; border-left: 1px solid #555; }
.command input { flex: 1; min-width: 0; height: 2px; padding: 0; border: 0; background: #fff; }
```
